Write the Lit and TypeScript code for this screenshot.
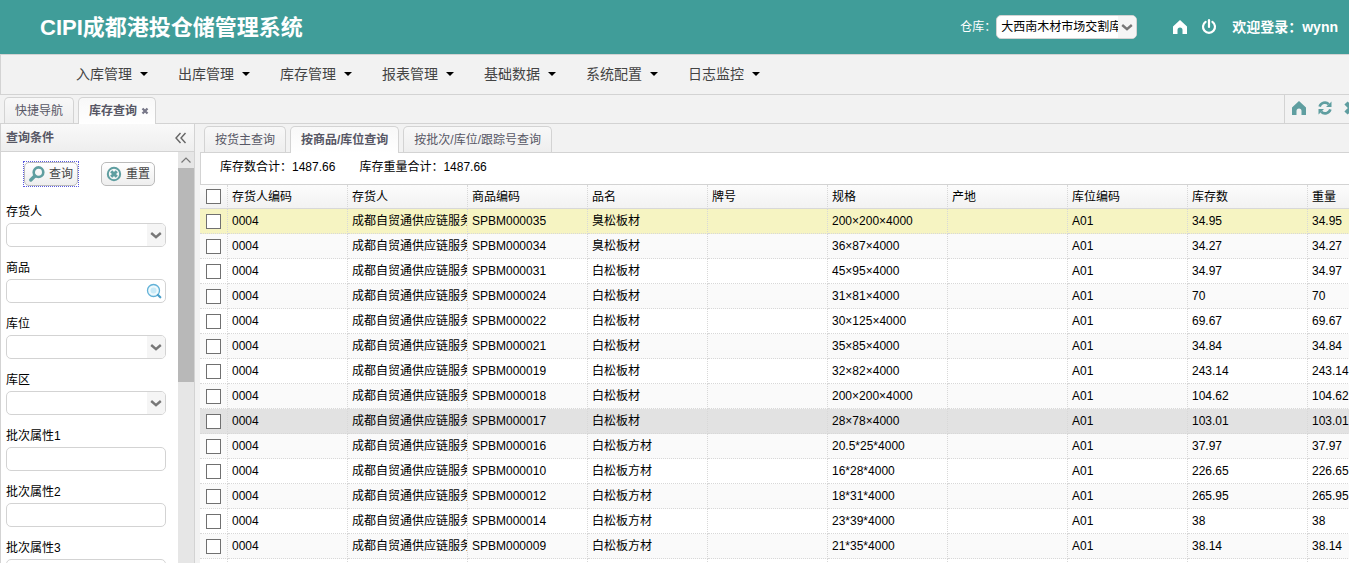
import { LitElement, html, css, svg } from "lit";
import { customElement, property } from "lit/decorators.js";

const MENUS = ["入库管理", "出库管理", "库存管理", "报表管理", "基础数据", "系统配置", "日志监控"];

const COLUMNS = ["存货人编码", "存货人", "商品编码", "品名", "牌号", "规格", "产地", "库位编码", "库存数", "重量"];

type Stock = { code: string; name: string; spec: string; qty: string; state?: string };

const STOCK: Stock[] = [
  { code: "SPBM000035", name: "臭松板材", spec: "200×200×4000", qty: "34.95", state: "selected" },
  { code: "SPBM000034", name: "臭松板材", spec: "36×87×4000", qty: "34.27" },
  { code: "SPBM000031", name: "白松板材", spec: "45×95×4000", qty: "34.97" },
  { code: "SPBM000024", name: "白松板材", spec: "31×81×4000", qty: "70" },
  { code: "SPBM000022", name: "白松板材", spec: "30×125×4000", qty: "69.67" },
  { code: "SPBM000021", name: "白松板材", spec: "35×85×4000", qty: "34.84" },
  { code: "SPBM000019", name: "白松板材", spec: "32×82×4000", qty: "243.14" },
  { code: "SPBM000018", name: "白松板材", spec: "200×200×4000", qty: "104.62" },
  { code: "SPBM000017", name: "白松板材", spec: "28×78×4000", qty: "103.01", state: "hovered" },
  { code: "SPBM000016", name: "白松板方材", spec: "20.5*25*4000", qty: "37.97" },
  { code: "SPBM000010", name: "白松板方材", spec: "16*28*4000", qty: "226.65" },
  { code: "SPBM000012", name: "白松板方材", spec: "18*31*4000", qty: "265.95" },
  { code: "SPBM000014", name: "白松板方材", spec: "23*39*4000", qty: "38" },
  { code: "SPBM000009", name: "白松板方材", spec: "21*35*4000", qty: "38.14" },
];

const ICONS = {
  home: svg`<path d="M8 1 15 7.5V15H10.5V11A2.5 2.500 0 0 0 5.5 11V15H1V7.5Z" fill="currentColor"/>`,
  power: svg`<path d="M4.6 2.9A6 6 0 1 0 11.4 2.9" fill="none" stroke="currentColor" stroke-width="2.2" stroke-linecap="round"/><path d="M8 1.2V8" stroke="currentColor" stroke-width="2.2" stroke-linecap="round"/>`,
  refresh: svg`<path d="M2.6 6.6A5.6 5.6 0 0 1 11.8 4.2M13.4 9.4A5.6 5.6 0 0 1 4.2 11.8" fill="none" stroke="currentColor" stroke-width="2.6"/><path d="M14.5 1.5V7H9ZM1.5 14.5V9H7Z" fill="currentColor"/>`,
  cross: svg`<path d="M3 3 13 13M13 3 3 13" stroke="currentColor" stroke-width="4.500"/>`,
  find: svg`<circle cx="9.5" cy="6.2" r="4.8" fill="none" stroke="currentColor" stroke-width="2.6"/><path d="M5.8 10 1.8 14" stroke="currentColor" stroke-width="3.4" stroke-linecap="round"/>`,
  reset: svg`<circle cx="8" cy="8" r="6.2" fill="none" stroke="currentColor" stroke-width="2"/><path d="M5.2 5.2 10.8 10.8M10.8 5.2 5.2 10.8" stroke="currentColor" stroke-width="3"/>`,
  lens: svg`<circle cx="7.5" cy="7.5" r="6" fill="#eef9fd" stroke="#62b2d8" stroke-width="1.3"/><circle cx="7.5" cy="7.5" r="3" fill="#c9eaf7"/><path d="M12 12 14.3 14.3" stroke="#4a9fca" stroke-width="2.2" stroke-linecap="round"/>`,
  chevron: svg`<path d="M3.2 6 8 10.2 12.8 6" fill="none" stroke="currentColor" stroke-width="2.4"/>`,
  up: svg`<path d="M3.5 10.5 8 6 12.5 10.5" fill="none" stroke="currentColor" stroke-width="1.2"/>`,
  collapse: svg`<path d="M7.5 3 3 8 7.5 13M12.5 3 8 8 12.5 13" fill="none" stroke="#666" stroke-width="1.4"/>`,
};

@customElement("ui-icon")
export class UiIcon extends LitElement {
  @property() name: keyof typeof ICONS = "home";
  static styles = css`
    :host { display: block; width: 16px; height: 16px; }
    svg { display: block; width: 100%; height: 100%; }
  `;
  render() {
    return html`<svg viewBox="0 0 16 16" aria-hidden="true">${ICONS[this.name]}</svg>`;
  }
}

@customElement("app-root")
export class AppRoot extends LitElement {
  static styles = css`
    :host {
      display: flex;
      flex-direction: column;
      height: 100vh;
      overflow: hidden;
      background: #f2f2f2;
      color: #000;
      font: 12px/16px "Liberation Sans", "Noto Sans CJK SC", sans-serif;
    }
    * { box-sizing: border-box; }
    button, select, input { font: inherit; color: inherit; margin: 0; }
    button { background: none; border: 0; padding: 0; cursor: pointer; }
    a { color: inherit; text-decoration: none; }

    .banner {
      flex: none;
      display: flex;
      align-items: center;
      height: 54px;
      padding: 0 11px 0 40px;
      background: #409d99;
      color: #fff;
    }
    .title { flex: 1; margin: 0; padding-top: 2px; font-size: 22px; line-height: 32px; font-weight: 700; }
    .depot { display: flex; align-items: center; }
    .depot .combo { width: 141px; color: #000; }
    .quick { display: flex; gap: 13px; padding: 0 15px 0 35px; }
    .user { font-size: 14px; line-height: 20px; font-weight: 700; }

    .combo { position: relative; display: block; height: 24px; }
    .combo select, .text {
      display: block;
      width: 100%;
      height: 24px;
      padding: 0 5px;
      border: 1px solid #d3d3d3;
      border-radius: 5px;
      background: #fff;
      appearance: none;
      outline: none;
    }
    .depot select { padding: 0 4px; }
    .arrow {
      position: absolute;
      top: 1px;
      right: 1px;
      display: grid;
      place-items: center;
      width: 18px;
      height: 22px;
      border-radius: 0 4px 4px 0;
      background: #f5f5f5;
      color: #777;
      pointer-events: none;
    }
    .arrow.plain { width: 22px; background: none; }

    .menu {
      flex: none;
      display: flex;
      gap: 30px;
      height: 41px;
      padding: 0 0 2px 75px;
      border: 1px solid #d3d3d3;
      border-right: 0;
    }
    .menu button {
      display: flex;
      align-items: center;
      gap: 8px;
      font-size: 14px;
      line-height: 20px;
      color: #444;
    }
    .menu button::after {
      content: "";
      border: 4px solid transparent;
      border-top-color: #000;
      border-bottom: 0;
    }

    .tabs {
      flex: none;
      display: flex;
      align-items: flex-end;
      gap: 4px;
      height: 29px;
      padding-left: 4px;
      border-bottom: 1px solid #d3d3d3;
    }
    .tab {
      display: flex;
      align-items: center;
      gap: 4px;
      height: 26px;
      padding: 0 10px;
      border: 1px solid #d3d3d3;
      border-bottom: 0;
      border-radius: 5px 5px 0 0;
      background: linear-gradient(#f8f8f8, #eee);
      color: #575765;
      white-space: nowrap;
    }
    .tab.active {
      height: 27px;
      margin-bottom: -1px;
      background: linear-gradient(#f8f8f8, #fff);
      font-weight: 700;
    }
    .tab ui-icon { width: 8px; height: 8px; color: #777788; }
    .tab.closable { padding-right: 6px; }
    .tools {
      align-self: stretch;
      display: flex;
      align-items: center;
      gap: 10px;
      width: 65px;
      margin-left: auto;
      padding: 0 0 2px 6px;
      border-left: 1px solid #d3d3d3;
      overflow: hidden;
      color: #5f9ea0;
    }
    .tools button { flex: none; }

    .body { flex: 1; min-height: 0; display: flex; gap: 5px; }
    .side {
      flex: none;
      display: flex;
      flex-direction: column;
      width: 195px;
      border: solid #d3d3d3;
      border-width: 0 1px;
      background: #fff;
    }
    .side-head {
      flex: none;
      display: flex;
      align-items: center;
      justify-content: space-between;
      height: 28px;
      padding: 0 5px;
      border-bottom: 1px solid #d3d3d3;
      background: linear-gradient(#f9f9f9, #eee);
      color: #575765;
    }
    .side-head h2 { margin: 0; font-size: 12px; line-height: 16px; }
    .side-main { flex: 1; min-height: 0; display: flex; }
    .form { flex: 1; padding: 10px 12px 0 5px; overflow: hidden; }
    .actions { display: flex; gap: 23px; padding-left: 18px; margin-bottom: 18px; }
    .action {
      position: relative;
      display: flex;
      align-items: center;
      gap: 4px;
      height: 24px;
      width: 54px;
      padding: 0 4px;
      border: 1px solid #bbb;
      border-radius: 5px;
      background: linear-gradient(#fff, #eee);
      color: #444;
      white-space: nowrap;
    }
    .action.focused::after {
      content: "";
      position: absolute;
      inset: -2px;
      border: 1px dotted #5a5ae0;
    }
    .action ui-icon { color: #5f9ea0; }
    .field { display: block; margin-bottom: 13px; }
    .field .label { display: block; height: 19px; }
    .scrollbar { flex: none; display: flex; flex-direction: column; width: 16px; background: #e6e6e6; color: #777; }
    .thumb { height: 52%; background: #b8b8b8; }

    .main { flex: 1; min-width: 0; display: flex; flex-direction: column; }
    .totals {
      flex: none;
      display: flex;
      gap: 24px;
      height: 32px;
      padding: 6px 19px 0;
      border-left: 1px solid #d3d3d3;
      border-bottom: 1px solid #d3d3d3;
      background: #fff;
    }
    .grid { flex: 1; min-height: 0; overflow: hidden; background: #fff; }
    table { width: 1228px; table-layout: fixed; border-collapse: separate; border-spacing: 0; }
    .pick { width: 28px; }
    th, td {
      height: 25px;
      padding: 0 0 0 4px;
      border-right: 1px dotted #d8d8d8;
      border-bottom: 1px dotted #d8d8d8;
      text-align: left;
      font-weight: 400;
      white-space: nowrap;
      overflow: hidden;
    }
    th { height: 24px; border-bottom-style: solid; background: linear-gradient(#fcfcfc, #f2f2f2); }
    th.box, td.box { padding-left: 6px; }
    tr:nth-child(even) td { background: #fafafa; }
    tr.selected td { background: #f6f4c2; }
    tr.hovered td { background: #e2e2e2; }
    .check {
      display: block;
      width: 15px;
      height: 15px;
      border: 1px solid #707070;
      background: #fff;
      appearance: none;
    }
  `;

  private combo(label: string) {
    return html`<label class="field"><span class="label">${label}</span>
      <span class="combo"><select><option></option></select><span class="arrow"><ui-icon name="chevron"></ui-icon></span></span></label>`;
  }

  private input(label: string) {
    return html`<label class="field"><span class="label">${label}</span><input class="text" type="text" /></label>`;
  }

  private row(s: Stock) {
    const cells = ["0004", "成都自贸通供应链服务", s.code, s.name, "", s.spec, "", "A01", s.qty, s.qty];
    return html`<tr class=${s.state ?? ""}>
      <td class="box"><input class="check" type="checkbox" aria-label=${s.code} /></td>
      ${cells.map((c) => html`<td>${c}</td>`)}
    </tr>`;
  }

  render() {
    return html`
      <header class="banner">
        <h1 class="title">CIPI成都港投仓储管理系统</h1>
        <label class="depot">仓库：
          <span class="combo"><select><option>大西南木材市场交割库</option></select><span class="arrow"><ui-icon name="chevron"></ui-icon></span></span>
        </label>
        <div class="quick">
          <a href="#" aria-label="首页"><ui-icon name="home"></ui-icon></a>
          <a href="#" aria-label="退出"><ui-icon name="power"></ui-icon></a>
        </div>
        <span class="user">欢迎登录：wynn</span>
      </header>
      <nav class="menu">${MENUS.map((m) => html`<button>${m}</button>`)}</nav>
      <div class="tabs">
        <button class="tab">快捷导航</button>
        <button class="tab active closable">库存查询<ui-icon name="cross"></ui-icon></button>
        <div class="tools">
          <button aria-label="首页"><ui-icon name="home"></ui-icon></button>
          <button aria-label="刷新"><ui-icon name="refresh"></ui-icon></button>
          <button aria-label="关闭"><ui-icon name="cross"></ui-icon></button>
        </div>
      </div>
      <div class="body">
        <aside class="side">
          <div class="side-head">
            <h2>查询条件</h2>
            <button aria-label="收起"><ui-icon name="collapse"></ui-icon></button>
          </div>
          <div class="side-main">
            <div class="form">
              <div class="actions">
                <button class="action focused"><ui-icon name="find"></ui-icon>查询</button>
                <button class="action"><ui-icon name="reset"></ui-icon>重置</button>
              </div>
              ${this.combo("存货人")}
              <label class="field"><span class="label">商品</span>
                <span class="combo"><input class="text" type="text" /><span class="arrow plain"><ui-icon name="lens"></ui-icon></span></span></label>
              ${this.combo("库位")} ${this.combo("库区")}
              ${["批次属性1", "批次属性2", "批次属性3"].map((l) => this.input(l))}
            </div>
            <div class="scrollbar"><ui-icon name="up"></ui-icon><div class="thumb"></div></div>
          </div>
        </aside>
        <main class="main">
          <div class="tabs">
            <button class="tab">按货主查询</button>
            <button class="tab active">按商品/库位查询</button>
            <button class="tab">按批次/库位/跟踪号查询</button>
          </div>
          <div class="totals"><span>库存数合计：1487.66</span><span>库存重量合计：1487.66</span></div>
          <div class="grid">
            <table>
              <colgroup><col class="pick" />${COLUMNS.map(() => html`<col />`)}</colgroup>
              <thead><tr>
                <th class="box"><input class="check" type="checkbox" aria-label="全选" /></th>
                ${COLUMNS.map((c) => html`<th>${c}</th>`)}
              </tr></thead>
              <tbody>
                ${STOCK.map((s) => this.row(s))}
                <tr><td></td>${COLUMNS.map(() => html`<td></td>`)}</tr>
              </tbody>
            </table>
          </div>
        </main>
      </div>
    `;
  }
}
